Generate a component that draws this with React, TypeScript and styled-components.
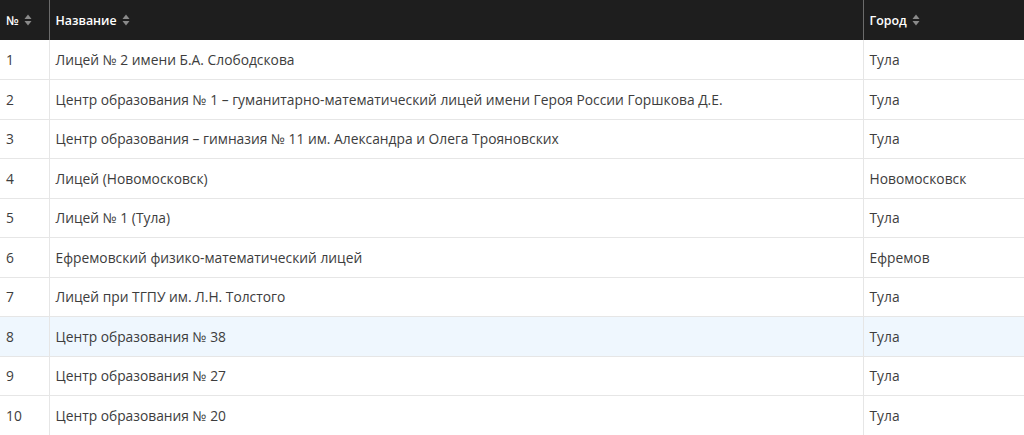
import React from "react";
import styled, { createGlobalStyle } from "styled-components";

const Global = createGlobalStyle`
  html, body { margin: 0; padding: 0; background: #fff; }
  body { font-family: "Open Sans", "Noto Sans", sans-serif; }
`;

const Table = styled.table`
  width: 1024px;
  border-collapse: collapse;
  table-layout: fixed;
  font-size: 13.8px;
  color: #3d3d3d;
`;

const HeadCell = styled.th<{ $w: number }>`
  width: ${(p) => p.$w}px;
  height: 40px;
  padding: 0 6px;
  background: #1e1e1e;
  color: #fff;
  font-size: 12.4px;
  font-weight: 600;
  text-align: left;
  border-left: 1px solid #6b6b6b;
  box-sizing: border-box;
  white-space: nowrap;
  &:first-child { border-left: none; }
`;

const HeadInner = styled.span`
  display: inline-flex;
  align-items: center;
  gap: 5px;
`;

const Row = styled.tr<{ $hl?: boolean }>`
  background: ${(p) => (p.$hl ? "#eff7fe" : "#fff")};
  border-bottom: 1px solid #e6e6e6;
`;

const Cell = styled.td`
  height: 39.5px;
  padding: 0 6px;
  border-left: 1px solid #e6e6e6;
  border-right: 1px solid #e6e6e6;
  box-sizing: border-box;
  white-space: nowrap;
  &:first-child { border-left: none; }
`;

const SortIcon = () => (
  <svg width="8" height="12" viewBox="0 0 8 12">
    <path d="M4 0.5 L7.5 5 L0.5 5 Z" fill="#8a8a8a" />
    <path d="M4 11.5 L7.5 7 L0.5 7 Z" fill="#8a8a8a" />
  </svg>
);

const rows: [string, string][] = [
  ["Лицей № 2 имени Б.А. Слободскова", "Тула"],
  ["Центр образования № 1 – гуманитарно-математический лицей имени Героя России Горшкова Д.Е.", "Тула"],
  ["Центр образования – гимназия № 11 им. Александра и Олега Трояновских", "Тула"],
  ["Лицей (Новомосковск)", "Новомосковск"],
  ["Лицей № 1 (Тула)", "Тула"],
  ["Ефремовский физико-математический лицей", "Ефремов"],
  ["Лицей при ТГПУ им. Л.Н. Толстого", "Тула"],
  ["Центр образования № 38", "Тула"],
  ["Центр образования № 27", "Тула"],
  ["Центр образования № 20", "Тула"],
];

export default function App() {
  return (
    <>
      <Global />
      <Table>
        <thead>
          <tr>
            <HeadCell $w={49}><HeadInner>№ <SortIcon /></HeadInner></HeadCell>
            <HeadCell $w={814}><HeadInner>Название <SortIcon /></HeadInner></HeadCell>
            <HeadCell $w={161}><HeadInner>Город <SortIcon /></HeadInner></HeadCell>
          </tr>
        </thead>
        <tbody>
          {rows.map(([name, city], i) => (
            <Row key={i} $hl={i === 7}>
              <Cell>{i + 1}</Cell>
              <Cell>{name}</Cell>
              <Cell>{city}</Cell>
            </Row>
          ))}
        </tbody>
      </Table>
    </>
  );
}
